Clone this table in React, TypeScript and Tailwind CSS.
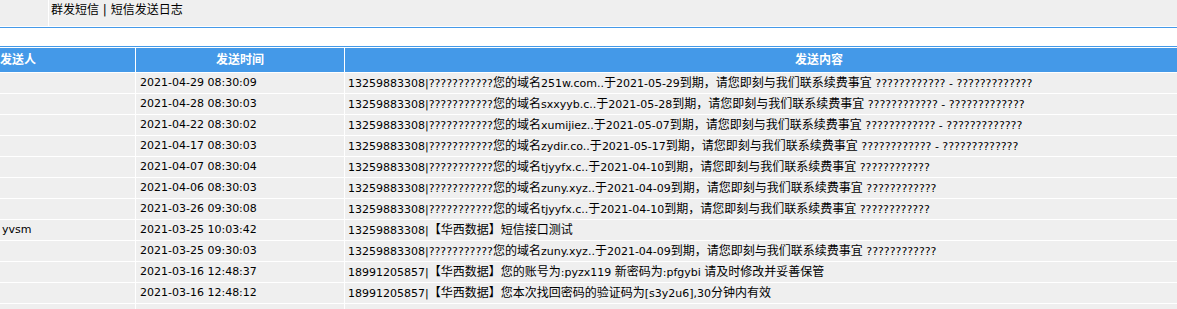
import React from "react";

const rows = [
  ["", "2021-04-29 08:30:09", "13259883308|???????????您的域名251w.com..于2021-05-29到期，请您即刻与我们联系续费事宜 ???????????? - ?????????????"],
  ["", "2021-04-28 08:30:03", "13259883308|???????????您的域名sxxyyb.c..于2021-05-28到期，请您即刻与我们联系续费事宜 ???????????? - ?????????????"],
  ["", "2021-04-22 08:30:02", "13259883308|???????????您的域名xumijiez..于2021-05-07到期，请您即刻与我们联系续费事宜 ???????????? - ?????????????"],
  ["", "2021-04-17 08:30:03", "13259883308|???????????您的域名zydir.co..于2021-05-17到期，请您即刻与我们联系续费事宜 ???????????? - ?????????????"],
  ["", "2021-04-07 08:30:04", "13259883308|???????????您的域名tjyyfx.c..于2021-04-10到期，请您即刻与我们联系续费事宜 ????????????"],
  ["", "2021-04-06 08:30:03", "13259883308|???????????您的域名zuny.xyz..于2021-04-09到期，请您即刻与我们联系续费事宜 ????????????"],
  ["", "2021-03-26 09:30:08", "13259883308|???????????您的域名tjyyfx.c..于2021-04-10到期，请您即刻与我们联系续费事宜 ????????????"],
  ["yvsm", "2021-03-25 10:03:42", "13259883308|【华西数据】短信接口测试"],
  ["", "2021-03-25 09:30:03", "13259883308|???????????您的域名zuny.xyz..于2021-04-09到期，请您即刻与我们联系续费事宜 ????????????"],
  ["", "2021-03-16 12:48:37", "18991205857|【华西数据】您的账号为:pyzx119 新密码为:pfgybi 请及时修改并妥善保管"],
  ["", "2021-03-16 12:48:12", "18991205857|【华西数据】您本次找回密码的验证码为[s3y2u6],30分钟内有效"],
  ["", "", ""],
];

const cjk = /([\u3000-\u303f\u4e00-\u9fff\uff00-\uffef]+)/;

// latin in 11px, chinese runs a bit bigger like the old bitmap font
function Txt({ text }: { text: string }) {
  return (
    <span className="whitespace-pre">
      {text.split(cjk).map((part, i) =>
        i % 2 ? (
          <span key={i} className="text-[12px]">
            {part}
          </span>
        ) : (
          part
        )
      )}
    </span>
  );
}

export default function App() {
  return (
    <div className="w-[1177px] h-[309px] overflow-hidden bg-white text-[11px] text-black font-['DejaVu_Sans','Noto_Sans_CJK_SC',sans-serif]">
      <div className="flex h-[27px] bg-[#efefef] border-b border-white">
        <div className="w-[49px] border-r border-white" />
        <div className="pl-[2px] leading-[20px] text-[12px]">群发短信 | 短信发送日志</div>
      </div>
      <div className="h-[20px] border-y border-[#4499e8]" />
      <div className="flex flex-col gap-px pt-px bg-white">
        <div className="flex gap-px h-[24px] bg-white text-[12px] font-bold text-white">
          <div className="w-[135px] bg-[#4499e8] flex items-center">发送人</div>
          <div className="w-[208px] bg-[#4499e8] flex items-center justify-center">发送时间</div>
          <div className="flex-1 bg-[#4499e8] flex items-center pl-[450px]">发送内容</div>
        </div>
        {rows.map((r, i) => (
          <div key={i} className="flex gap-px h-[20px] shrink-0">
            <div className="w-[135px] bg-[#efefef] flex items-center pl-[2px]">{r[0]}</div>
            <div className="w-[208px] bg-[#efefef] flex items-center pl-[4px]">{r[1]}</div>
            <div className="flex-1 bg-[#efefef] flex items-center pl-[3px]">
              <Txt text={r[2]} />
            </div>
          </div>
        ))}
      </div>
    </div>
  );
}
